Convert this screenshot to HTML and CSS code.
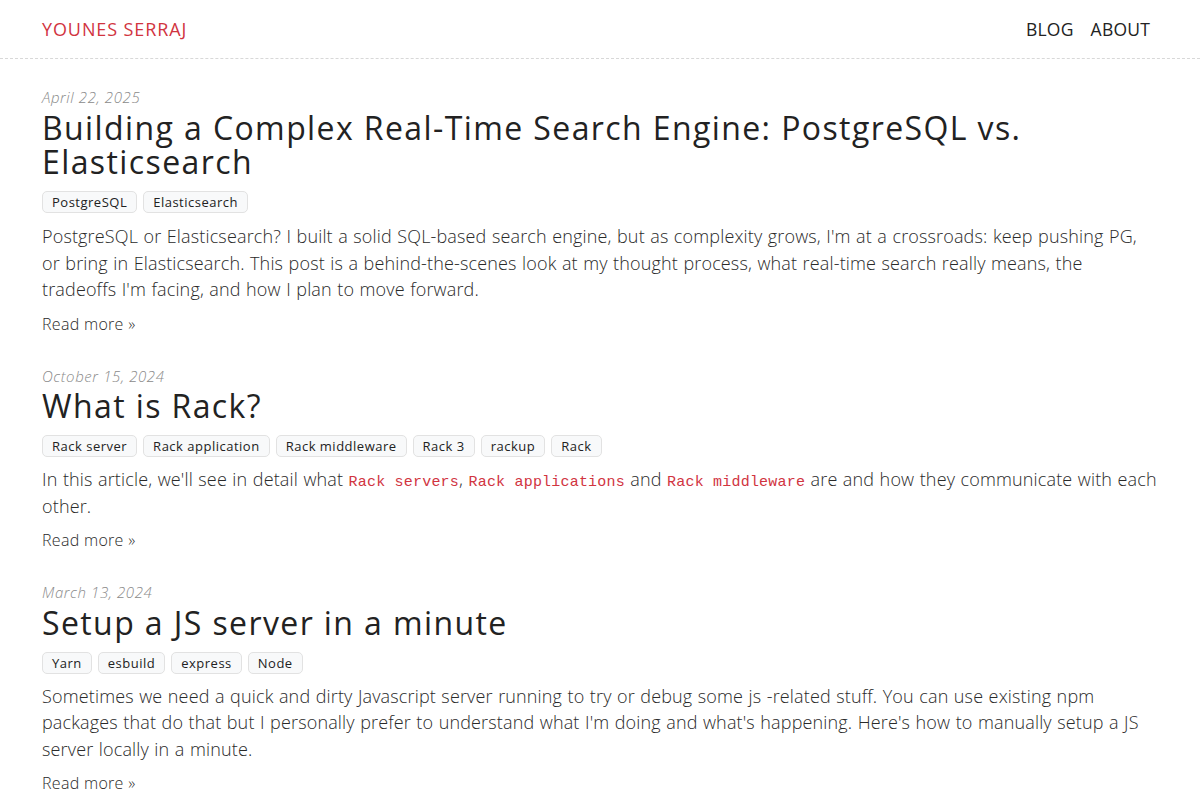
FILE: index.html
```html
<!DOCTYPE html>
<html lang="en">
<head>
<meta charset="utf-8">
<title>Younes Serraj</title>
<link rel="stylesheet" href="styles.css">
</head>
<body>
<header class="site-header">
  <div class="header-inner">
    <a class="brand" href="#">YOUNES SERRAJ</a>
    <nav class="nav">
      <a href="#">BLOG</a>
      <a href="#">ABOUT</a>
    </nav>
  </div>
</header>
<main class="posts">
  <article class="post">
    <div class="date">April 22, 2025</div>
    <h2 class="title">Building a Complex Real-Time Search Engine: PostgreSQL vs. Elasticsearch</h2>
    <div class="tags"><span class="tag">PostgreSQL</span><span class="tag">Elasticsearch</span></div>
    <p class="excerpt">PostgreSQL or Elasticsearch? I built a solid SQL-based search engine, but as complexity grows, I'm at a crossroads: keep pushing PG, or bring in Elasticsearch. This post is a behind-the-scenes look at my thought process, what real-time search really means, the tradeoffs I'm facing, and how I plan to move forward.</p>
    <a class="more" href="#">Read more »</a>
  </article>
  <article class="post">
    <div class="date">October 15, 2024</div>
    <h2 class="title">What is Rack?</h2>
    <div class="tags"><span class="tag">Rack server</span><span class="tag">Rack application</span><span class="tag">Rack middleware</span><span class="tag">Rack 3</span><span class="tag">rackup</span><span class="tag">Rack</span></div>
    <p class="excerpt excerpt-tight">In this article, we'll see in detail what <code>Rack servers</code>, <code>Rack applications</code> and <code>Rack middleware</code> are and how they communicate with each other.</p>
    <a class="more" href="#">Read more »</a>
  </article>
  <article class="post">
    <div class="date">March 13, 2024</div>
    <h2 class="title">Setup a JS server in a minute</h2>
    <div class="tags"><span class="tag">Yarn</span><span class="tag">esbuild</span><span class="tag">express</span><span class="tag">Node</span></div>
    <p class="excerpt excerpt-tight">Sometimes we need a quick and dirty Javascript server running to try or debug some js -related stuff. You can use existing npm packages that do that but I personally prefer to understand what I'm doing and what's happening. Here's how to manually setup a JS server locally in a minute.</p>
    <a class="more" href="#">Read more »</a>
  </article>
</main>
</body>
</html>
```
FILE: styles.css
```css
* { box-sizing: border-box; }
html, body { margin: 0; padding: 0; }
body {
  font-family: "Open Sans", "Noto Sans", sans-serif;
  font-weight: 300;
  color: #2b2b2b;
  background: #fff;
}
a { text-decoration: none; color: inherit; }

.site-header {
  border-bottom: 1px dashed #d8d8d8;
}
.header-inner {
  height: 58px;
  padding: 0 50px 0 42px;
  display: flex;
  align-items: center;
  justify-content: space-between;
}
.brand {
  color: #d1343f;
  font-size: 18px;
  font-weight: 400;
  letter-spacing: 0.9px;
}
.nav {
  display: flex;
  gap: 17px;
  font-size: 17.5px;
  font-weight: 400;
  letter-spacing: 0.2px;
  color: #222;
}

.posts {
  padding: 28px 42px 0;
  display: flex;
  flex-direction: column;
  gap: 31px;
}
.post {
  display: flex;
  flex-direction: column;
  align-items: flex-start;
}
.date {
  font-size: 15px;
  font-style: italic;
  color: #8a8a8a;
  line-height: 20px;
  letter-spacing: 0.6px;
}
.title {
  margin: 3.5px 0 0;
  font-size: 32px;
  font-weight: 400;
  line-height: 34px;
  color: #222;
  letter-spacing: 1.4px;
}
.tags {
  display: flex;
  flex-wrap: wrap;
  gap: 6px;
  margin-top: 12px;
}
.tag {
  font-size: 13px;
  font-weight: 400;
  line-height: 20px;
  padding: 0 9px;
  border: 1px solid #e2e2e2;
  border-radius: 5px;
  background: #f8f9fa;
  color: #222;
  letter-spacing: 0.5px;
}
.excerpt {
  margin: 10.5px 0 0;
  font-size: 18px;
  line-height: 26.5px;
  color: #2a2a2a;
  letter-spacing: 0.15px;
  word-spacing: 0.6px;
}
.excerpt-tight {
  margin-top: 9px;
}
code {
  font-family: "Liberation Mono", monospace;
  font-size: 15px;
  letter-spacing: 0.2px;
  word-spacing: 0;
  color: #d1343f;
  line-height: 1;
}
.more {
  margin-top: 10px;
  font-size: 16px;
  line-height: 22px;
  color: #2a2a2a;
  letter-spacing: 0.3px;
}
```
